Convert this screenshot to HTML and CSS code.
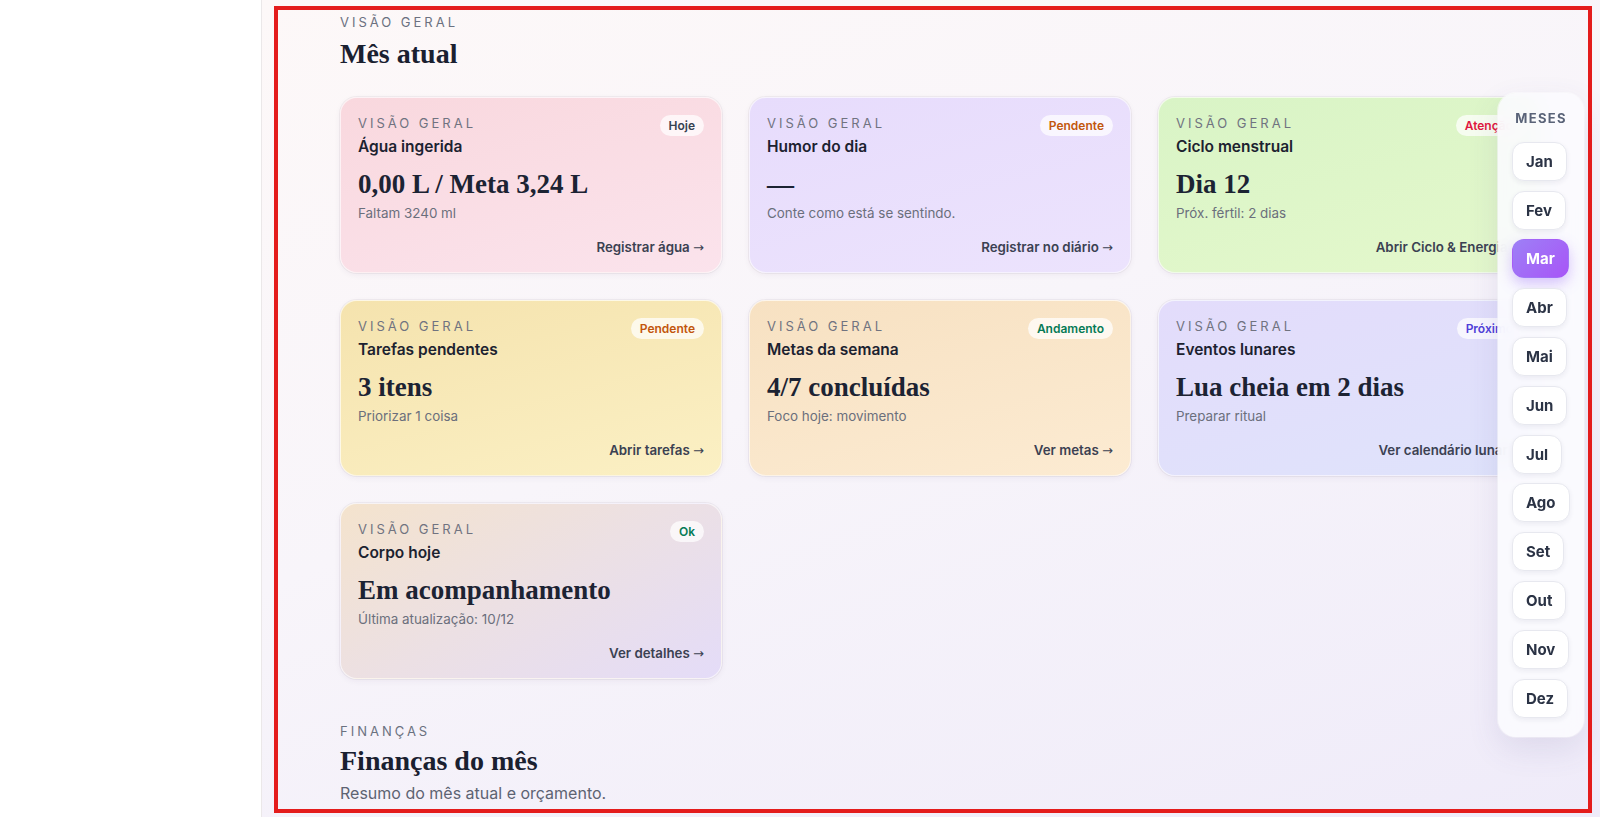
FILE: index.html
```html
<!DOCTYPE html>
<html lang="pt-BR">
<head>
<meta charset="utf-8">
<title>Mês atual</title>
<link rel="stylesheet" href="styles.css">
</head>
<body>
<div class="layout">
  <aside class="sidebar"></aside>
  <main class="main">
    <section class="section">
      <div class="eyebrow">Visão geral</div>
      <h1 class="heading">Mês atual</h1>
    </section>

    <div class="grid">
      <article class="card card-agua">
        <div class="card-head"><span class="card-eyebrow">Visão geral</span><span class="badge badge-dark">Hoje</span></div>
        <h2 class="card-title">Água ingerida</h2>
        <div class="card-value">0,00 L / Meta 3,24 L</div>
        <div class="card-sub">Faltam 3240 ml</div>
        <a class="card-link">Registrar água <span class="arrow">→</span></a>
      </article>
      <article class="card card-humor">
        <div class="card-head"><span class="card-eyebrow">Visão geral</span><span class="badge badge-orange">Pendente</span></div>
        <h2 class="card-title">Humor do dia</h2>
        <div class="card-value">—</div>
        <div class="card-sub">Conte como está se sentindo.</div>
        <a class="card-link">Registrar no diário <span class="arrow">→</span></a>
      </article>
      <article class="card card-ciclo">
        <div class="card-head"><span class="card-eyebrow">Visão geral</span><span class="badge badge-red">Atenção</span></div>
        <h2 class="card-title">Ciclo menstrual</h2>
        <div class="card-value">Dia 12</div>
        <div class="card-sub">Próx. fértil: 2 dias</div>
        <a class="card-link">Abrir Ciclo &amp; Energia <span class="arrow">→</span></a>
      </article>
      <article class="card card-tarefas">
        <div class="card-head"><span class="card-eyebrow">Visão geral</span><span class="badge badge-orange">Pendente</span></div>
        <h2 class="card-title">Tarefas pendentes</h2>
        <div class="card-value">3 itens</div>
        <div class="card-sub">Priorizar 1 coisa</div>
        <a class="card-link">Abrir tarefas <span class="arrow">→</span></a>
      </article>
      <article class="card card-metas">
        <div class="card-head"><span class="card-eyebrow">Visão geral</span><span class="badge badge-green">Andamento</span></div>
        <h2 class="card-title">Metas da semana</h2>
        <div class="card-value">4/7 concluídas</div>
        <div class="card-sub">Foco hoje: movimento</div>
        <a class="card-link">Ver metas <span class="arrow">→</span></a>
      </article>
      <article class="card card-lua">
        <div class="card-head"><span class="card-eyebrow">Visão geral</span><span class="badge badge-indigo">Próximo</span></div>
        <h2 class="card-title">Eventos lunares</h2>
        <div class="card-value">Lua cheia em 2 dias</div>
        <div class="card-sub">Preparar ritual</div>
        <a class="card-link">Ver calendário lunar <span class="arrow">→</span></a>
      </article>
      <article class="card card-corpo">
        <div class="card-head"><span class="card-eyebrow">Visão geral</span><span class="badge badge-green">Ok</span></div>
        <h2 class="card-title">Corpo hoje</h2>
        <div class="card-value">Em acompanhamento</div>
        <div class="card-sub">Última atualização: 10/12</div>
        <a class="card-link">Ver detalhes <span class="arrow">→</span></a>
      </article>
    </div>

    <section class="section section-fin">
      <div class="eyebrow">Finanças</div>
      <h1 class="heading">Finanças do mês</h1>
      <p class="section-sub">Resumo do mês atual e orçamento.</p>
    </section>
  </main>
</div>

<nav class="months">
  <div class="months-label">Meses</div>
  <button class="month">Jan</button>
  <button class="month">Fev</button>
  <button class="month month-active">Mar</button>
  <button class="month">Abr</button>
  <button class="month">Mai</button>
  <button class="month">Jun</button>
  <button class="month">Jul</button>
  <button class="month">Ago</button>
  <button class="month">Set</button>
  <button class="month">Out</button>
  <button class="month">Nov</button>
  <button class="month">Dez</button>
</nav>

<div class="highlight"></div>
</body>
</html>
```

FILE: styles.css
```css
* { box-sizing: border-box; }

html, body {
  margin: 0;
  padding: 0;
  width: 1600px;
  height: 817px;
  overflow: hidden;
  font-family: "Inter", "Noto Sans", sans-serif;
  color: #1f2533;
}

.layout {
  display: flex;
  height: 817px;
}

.sidebar {
  width: 262px;
  flex: none;
  background: #ffffff;
  border-right: 1px solid #ebe8e9;
}

.main {
  flex: 1;
  padding: 14px 0 0 78px;
  background: linear-gradient(160deg, #fdf8f8 0%, #f8f5fa 45%, #efebf9 100%);
  overflow: hidden;
}

.eyebrow {
  font-size: 13px;
  line-height: 16px;
  letter-spacing: 0.23em;
  text-transform: uppercase;
  color: #6b7180;
}

.heading {
  margin: 6px 0 0;
  font-family: "Liberation Serif", "DejaVu Serif", serif;
  font-weight: 700;
  font-size: 28px;
  line-height: 36px;
  color: #1a2030;
}

.grid {
  margin-top: 25px;
  display: grid;
  grid-template-columns: repeat(3, 382px);
  grid-auto-rows: 176px;
  gap: 27px;
}

.card {
  display: flex;
  flex-direction: column;
  padding: 17px 17px 15px;
  border-radius: 17px;
  border: 1px solid rgba(255, 255, 255, 0.6);
  box-shadow: 0 0 0 1px rgba(60, 40, 60, 0.05), 0 2px 6px rgba(60, 40, 80, 0.06);
}

.card-agua   { background: linear-gradient(165deg, #f9d8de 0%, #fbe3ec 100%); }
.card-humor  { background: linear-gradient(165deg, #e7dcfc 0%, #ece3fd 100%); }
.card-ciclo  { background: linear-gradient(165deg, #d9f4c6 0%, #e4f8cc 100%); }
.card-tarefas{ background: linear-gradient(165deg, #f5e3ae 0%, #fbf0c4 100%); }
.card-metas  { background: linear-gradient(165deg, #f7e1c2 0%, #fcebd2 100%); }
.card-lua    { background: linear-gradient(165deg, #e3dcfb 0%, #dfe3fb 100%); }
.card-corpo  { background: linear-gradient(150deg, #f4e3cd 0%, #ece0e4 50%, #e4dcf8 100%); }

.card-head {
  display: flex;
  justify-content: space-between;
  align-items: flex-start;
  height: 21px;
}

.card-eyebrow {
  font-size: 13px;
  line-height: 16px;
  letter-spacing: 0.23em;
  text-transform: uppercase;
  color: #707380;
}

.badge {
  height: 21px;
  line-height: 21px;
  padding: 0 9px;
  border-radius: 11px;
  background: rgba(255, 255, 255, 0.72);
  font-size: 12px;
  font-weight: 600;
  white-space: nowrap;
}
.badge-dark   { color: #374151; }
.badge-orange { color: #c2560c; }
.badge-red    { color: #e0193f; }
.badge-green  { color: #067a55; }
.badge-indigo { color: #4f3fd9; }

.card-title {
  margin: 1px 0 0;
  font-size: 15.5px;
  line-height: 20px;
  font-weight: 600;
  color: #1c2230;
}

.card-value {
  margin-top: 9px;
  font-family: "Liberation Serif", "DejaVu Serif", serif;
  font-weight: 700;
  font-size: 27px;
  line-height: 36px;
  color: #1c2333;
  white-space: nowrap;
}

.card-sub {
  margin-top: 2px;
  font-size: 13.4px;
  line-height: 18px;
  color: #6b6f7c;
}

.card-link {
  margin-top: auto;
  align-self: flex-end;
  font-size: 13.3px;
  line-height: 18px;
  font-weight: 600;
  color: #3b4152;
  white-space: nowrap;
}

.arrow {
  font-family: "DejaVu Sans", sans-serif;
  font-weight: 400;
  font-size: 13px;
}

.section-fin {
  margin-top: 44px;
}

.section-fin .heading {
  margin-top: 4px;
}

.section-sub {
  margin: 3px 0 0;
  font-size: 16px;
  line-height: 22px;
  color: #5d6372;
}

/* Floating month picker */
.months {
  position: absolute;
  left: 1498px;
  top: 93px;
  width: 86px;
  height: 644px;
  padding: 16px 14px 18px;
  display: flex;
  flex-direction: column;
  align-items: flex-start;
  gap: 9.8px;
  border-radius: 18px;
  background: rgba(251, 251, 254, 0.9);
  backdrop-filter: blur(8px);
  box-shadow: 0 12px 32px rgba(80, 70, 140, 0.12), 0 0 0 1px rgba(255, 255, 255, 0.6);
}

.months-label {
  font-size: 13px;
  line-height: 18px;
  font-weight: 700;
  letter-spacing: 0.1em;
  text-transform: uppercase;
  color: #5a6378;
  margin-bottom: 5px;
  align-self: center;
}

.month {
  height: 39px;
  padding: 0 13px;
  border: 1px solid #e7e8ef;
  border-radius: 12px;
  background: #ffffff;
  box-shadow: 0 2px 5px rgba(40, 40, 80, 0.07);
  font-family: "Inter", "Noto Sans", sans-serif;
  font-size: 15px;
  font-weight: 700;
  color: #2b3345;
  cursor: pointer;
}

.month-active {
  border-color: transparent;
  background: linear-gradient(135deg, #9d80f6 0%, #a855f7 100%);
  color: #ffffff;
  box-shadow: 0 6px 14px rgba(139, 92, 246, 0.35);
}

/* Red highlight frame over the content */
.highlight {
  position: absolute;
  left: 274px;
  top: 6px;
  width: 1318px;
  height: 807px;
  border: 4px solid #e41c1c;
  pointer-events: none;
}
```
